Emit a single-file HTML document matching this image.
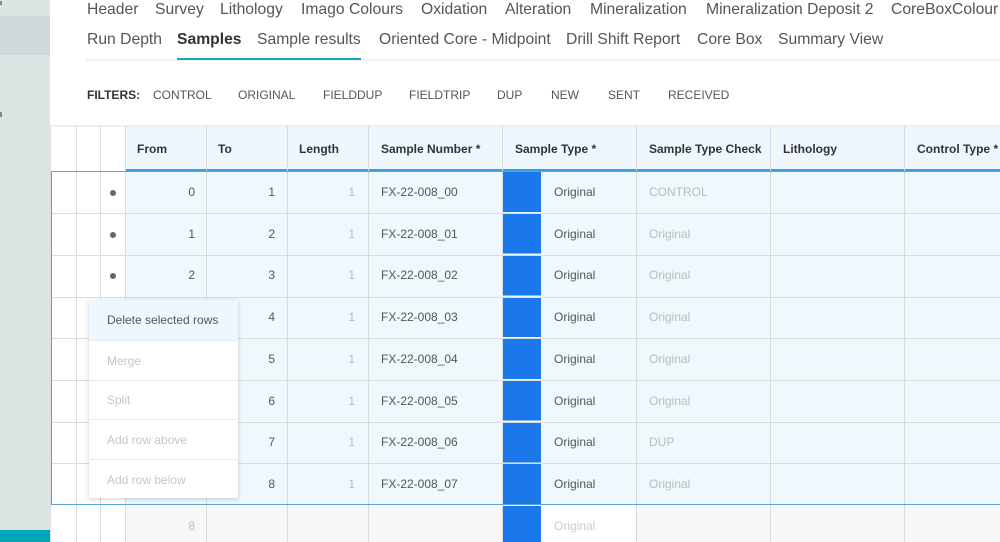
<!DOCTYPE html>
<html><head><meta charset="utf-8"><style>
*{margin:0;padding:0;box-sizing:border-box}
body{width:1000px;height:542px;overflow:hidden;background:#fff;font-family:"Liberation Sans",Arial,sans-serif;position:relative;color:#444}
.a{position:absolute;white-space:nowrap}
.tab{font-size:15.7px;color:#555;line-height:20px}
.f{font-size:12px;color:#555;top:88px;line-height:14px}
.v{position:absolute;top:126px;height:416px;width:1px;background:#d9dcdd}
.h{position:absolute;left:50px;width:950px;height:1px;background:#dadddd}
.ht{font-size:12px;font-weight:bold;color:#333;top:142px}
.c{font-size:12px;line-height:14px;color:#555}
.mi{position:absolute;left:0;width:149px;height:40px;border-bottom:1px solid #ececec;font-size:12px;color:#c6c6c6;padding:13px 0 0 18px}
</style></head><body>
<div class="a" style="left:0;top:0;width:50px;height:542px;background:#dce4e4"></div>
<div class="a" style="left:0;top:16px;width:50px;height:39px;background:#cdd9d9"></div>
<div class="a" style="left:0;top:530px;width:50px;height:12px;background:#00a6b6"></div>
<div class="a" style="left:0;top:1px;width:2px;height:4px;background:#888"></div>
<div class="a" style="left:0;top:112px;width:2px;height:5px;background:#888"></div>

<div class="a tab" style="left:87px;top:0">Header</div>
<div class="a tab" style="left:155px;top:0">Survey</div>
<div class="a tab" style="left:220px;top:0">Lithology</div>
<div class="a tab" style="left:301px;top:0">Imago Colours</div>
<div class="a tab" style="left:421px;top:0">Oxidation</div>
<div class="a tab" style="left:505px;top:0">Alteration</div>
<div class="a tab" style="left:590px;top:0">Mineralization</div>
<div class="a tab" style="left:706px;top:0">Mineralization Deposit 2</div>
<div class="a tab" style="left:891px;top:0">CoreBoxColour</div>
<div class="a tab" style="left:87px;top:30px">Run Depth</div>
<div class="a tab" style="left:177px;top:30px;font-weight:bold;color:#333">Samples</div>
<div class="a tab" style="left:257px;top:30px">Sample results</div>
<div class="a tab" style="left:379px;top:30px">Oriented Core - Midpoint</div>
<div class="a tab" style="left:566px;top:30px">Drill Shift Report</div>
<div class="a tab" style="left:697px;top:30px">Core Box</div>
<div class="a tab" style="left:778px;top:30px">Summary View</div>
<div class="a" style="left:86px;top:59px;width:914px;height:2px;background:#f0f0f0"></div>
<div class="a" style="left:177px;top:58px;width:184px;height:2px;background:#1aa8b8"></div>

<div class="a f" style="left:87px;font-weight:bold;color:#333">FILTERS:</div>
<div class="a f" style="left:153px">CONTROL</div>
<div class="a f" style="left:238px">ORIGINAL</div>
<div class="a f" style="left:323px">FIELDDUP</div>
<div class="a f" style="left:409px">FIELDTRIP</div>
<div class="a f" style="left:497px">DUP</div>
<div class="a f" style="left:551px">NEW</div>
<div class="a f" style="left:608px">SENT</div>
<div class="a f" style="left:668px">RECEIVED</div>

<div class="a" style="left:50px;top:125px;width:950px;height:2px;background:#eee"></div>
<div class="a" style="left:125px;top:127px;width:875px;height:42px;background:#edf7fd"></div>
<div class="a" style="left:125px;top:169px;width:875px;height:2px;background:#3c9ee0"></div>
<div class="a" style="left:125px;top:171px;width:875px;height:334px;background:#eef8fd"></div>
<div class="a" style="left:125px;top:505px;width:875px;height:37px;background:#f7f7f7"></div>
<div class="a" style="left:502px;top:505px;width:134px;height:37px;background:#fff"></div>
<div class="a" style="left:503px;top:172px;width:38px;height:370px;background:repeating-linear-gradient(#1a78ea 0 40px,#eef8fd 40px 41.75px)"></div>

<div class="v" style="left:50px"></div><div class="v" style="left:76px"></div><div class="v" style="left:100px"></div><div class="v" style="left:125px"></div><div class="v" style="left:206px"></div><div class="v" style="left:287px"></div><div class="v" style="left:368px"></div><div class="v" style="left:502px"></div><div class="v" style="left:636px"></div><div class="v" style="left:770px"></div><div class="v" style="left:904px"></div>
<div class="h" style="top:213px"></div><div class="h" style="top:255px"></div><div class="h" style="top:297px"></div><div class="h" style="top:338px"></div><div class="h" style="top:380px"></div><div class="h" style="top:422px"></div><div class="h" style="top:463px"></div>
<div class="a" style="left:51px;top:171px;width:949px;height:334px;border:1px solid #5aa6d8;border-right:none"></div>

<div class="a ht" style="left:137px">From</div>
<div class="a ht" style="left:218px">To</div>
<div class="a ht" style="left:299px">Length</div>
<div class="a ht" style="left:381px">Sample Number *</div>
<div class="a ht" style="left:515px">Sample Type *</div>
<div class="a ht" style="left:649px">Sample Type Check</div>
<div class="a ht" style="left:783px">Lithology</div>
<div class="a ht" style="left:917px">Control Type *</div>

<div style="position:absolute;left:0;top:185px;width:1000px">
<div class="a" style="top:0;left:0;width:1000px">
<span class="a" style="left:110px;top:5px;width:6px;height:6px;border-radius:3px;background:#666"></span>
<span class="a c" style="left:170px;width:25px;text-align:right">0</span><span class="a c" style="left:250px;width:25px;text-align:right">1</span><span class="a c" style="left:330px;width:25px;text-align:right;color:#bbb">1</span><span class="a c" style="left:381px">FX-22-008_00</span><span class="a c" style="left:554px">Original</span><span class="a c" style="left:649px;color:#bbb">CONTROL</span></div>
<div class="a" style="top:41.7px;left:0;width:1000px">
<span class="a" style="left:110px;top:5px;width:6px;height:6px;border-radius:3px;background:#666"></span>
<span class="a c" style="left:170px;width:25px;text-align:right">1</span><span class="a c" style="left:250px;width:25px;text-align:right">2</span><span class="a c" style="left:330px;width:25px;text-align:right;color:#bbb">1</span><span class="a c" style="left:381px">FX-22-008_01</span><span class="a c" style="left:554px">Original</span><span class="a c" style="left:649px;color:#bbb">Original</span></div>
<div class="a" style="top:83.4px;left:0;width:1000px">
<span class="a" style="left:110px;top:5px;width:6px;height:6px;border-radius:3px;background:#666"></span>
<span class="a c" style="left:170px;width:25px;text-align:right">2</span><span class="a c" style="left:250px;width:25px;text-align:right">3</span><span class="a c" style="left:330px;width:25px;text-align:right;color:#bbb">1</span><span class="a c" style="left:381px">FX-22-008_02</span><span class="a c" style="left:554px">Original</span><span class="a c" style="left:649px;color:#bbb">Original</span></div>
<div class="a" style="top:125.1px;left:0;width:1000px"><span class="a c" style="left:250px;width:25px;text-align:right">4</span><span class="a c" style="left:330px;width:25px;text-align:right;color:#bbb">1</span><span class="a c" style="left:381px">FX-22-008_03</span><span class="a c" style="left:554px">Original</span><span class="a c" style="left:649px;color:#bbb">Original</span></div>
<div class="a" style="top:166.8px;left:0;width:1000px"><span class="a c" style="left:250px;width:25px;text-align:right">5</span><span class="a c" style="left:330px;width:25px;text-align:right;color:#bbb">1</span><span class="a c" style="left:381px">FX-22-008_04</span><span class="a c" style="left:554px">Original</span><span class="a c" style="left:649px;color:#bbb">Original</span></div>
<div class="a" style="top:208.5px;left:0;width:1000px"><span class="a c" style="left:250px;width:25px;text-align:right">6</span><span class="a c" style="left:330px;width:25px;text-align:right;color:#bbb">1</span><span class="a c" style="left:381px">FX-22-008_05</span><span class="a c" style="left:554px">Original</span><span class="a c" style="left:649px;color:#bbb">Original</span></div>
<div class="a" style="top:250.2px;left:0;width:1000px"><span class="a c" style="left:250px;width:25px;text-align:right">7</span><span class="a c" style="left:330px;width:25px;text-align:right;color:#bbb">1</span><span class="a c" style="left:381px">FX-22-008_06</span><span class="a c" style="left:554px">Original</span><span class="a c" style="left:649px;color:#bbb">DUP</span></div>
<div class="a" style="top:291.9px;left:0;width:1000px"><span class="a c" style="left:250px;width:25px;text-align:right">8</span><span class="a c" style="left:330px;width:25px;text-align:right;color:#bbb">1</span><span class="a c" style="left:381px">FX-22-008_07</span><span class="a c" style="left:554px">Original</span><span class="a c" style="left:649px;color:#bbb">Original</span></div>
<div class="a" style="top:333.6px;left:0;width:1000px"><span class="a c" style="left:170px;width:25px;text-align:right;color:#bbb">8</span><span class="a c" style="left:554px;color:#ccc">Original</span></div>
</div>

<div class="a" style="left:89px;top:300px;width:149px;height:198px;background:#fff;box-shadow:0 1px 5px rgba(0,0,0,.2);border-radius:2px;overflow:hidden">
<div class="mi" style="top:0;height:41px;background:#eef7fd;color:#555">Delete selected rows</div>
<div class="mi" style="top:41px">Merge</div>
<div class="mi" style="top:80px">Split</div>
<div class="mi" style="top:120px">Add row above</div>
<div class="mi" style="top:160px;border:none">Add row below</div>
</div>
</body></html>
